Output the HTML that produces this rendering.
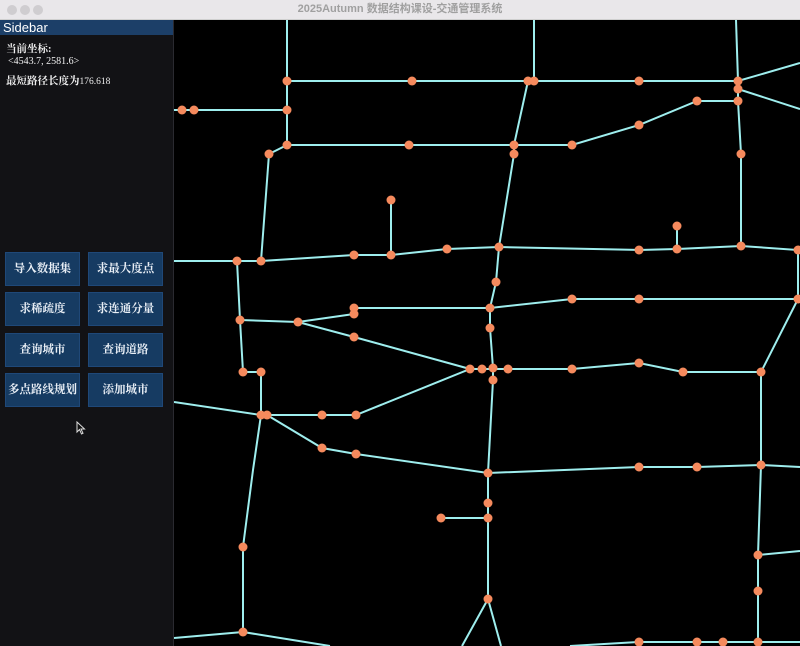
<!DOCTYPE html>
<html><head><meta charset="utf-8"><style>
*{margin:0;padding:0;box-sizing:border-box}
body{width:800px;height:646px;overflow:hidden;background:#000;position:relative;font-family:"Liberation Serif","Noto Serif CJK SC",serif}
#tb{position:absolute;left:0;top:0;width:800px;height:20px;background:#e9e7ea;border-bottom:1px solid #cfcfcf;text-align:center;font:bold 11px "Liberation Sans","Noto Sans CJK SC",sans-serif;color:#a0a0a0;line-height:19px}
.dot{position:absolute;top:5px;width:10px;height:10px;border-radius:50%;background:#cfcdd0}
#sb{position:absolute;left:0;top:20px;width:174px;height:626px;background:#121215;border-right:1px solid #2a2a30}
#sh{height:15px;background:#1c3f68;color:#fff;font:13px "Liberation Sans",sans-serif;padding-left:3px;line-height:15px}
.t{position:absolute;color:#f0f0f0;font-size:10.5px;font-weight:bold}
.b{position:absolute;width:75px;height:34px;background:#163b62;border:1px solid #1f4878;color:#e8eef5;font-size:11.5px;font-weight:bold;text-align:center;line-height:32px}
svg{position:absolute;left:174px;top:20px}
</style></head><body>
<div id="tb"><div class="dot" style="left:7px"></div><div class="dot" style="left:20px"></div><div class="dot" style="left:33px"></div>2025Autumn 数据结构课设-交通管理系统</div>
<div id="sb"><div id="sh">Sidebar</div>
<div class="t" style="left:6px;top:21px">当前坐标:</div>
<div class="t" style="left:8px;top:36px;font-weight:normal;font-size:10px">&lt;4543.7, 2581.6&gt;</div>
<div class="t" style="left:6px;top:53px">最短路径长度为<span style="font-weight:normal;font-size:9.5px">176.618</span></div>
<div class="b" style="left:5px;top:232px">导入数据集</div><div class="b" style="left:88px;top:232px">求最大度点</div>
<div class="b" style="left:5px;top:272px">求稀疏度</div><div class="b" style="left:88px;top:272px">求连通分量</div>
<div class="b" style="left:5px;top:313px">查询城市</div><div class="b" style="left:88px;top:313px">查询道路</div>
<div class="b" style="left:5px;top:353px">多点路线规划</div><div class="b" style="left:88px;top:353px">添加城市</div>
<svg style="position:absolute;left:76px;top:401px" width="10" height="14" viewBox="0 0 10 14"><path d="M1 1 L1 11 L3.5 8.5 L5.5 13 L7 12.3 L5 8 L8.5 8 Z" fill="#111" stroke="#ddd" stroke-width="1"/></svg>
</div>
<svg width="626" height="626" viewBox="174 20 626 626">
<g stroke="#9eeeee" stroke-width="2" fill="none">
<polyline points="287,20 287,81 287,110 287,145"/>
<polyline points="287,81 412,81 528,81 534,81 639,81 738,81 800,63"/>
<polyline points="534,20 534,81"/>
<polyline points="736,20 738,81 738,89 738,101 741,154 741,249"/>
<polyline points="738,89 800,109"/>
<polyline points="174,110 182,110 194,110 287,110"/>
<polyline points="287,145 409,145 514,145 572,145 639,125 697,101 738,101"/>
<polyline points="287,145 269,154 261,261"/>
<polyline points="528,81 514,145 514,154 499,247"/>
<polyline points="391,200 391,255"/>
<polyline points="677,226 677,249"/>
<polyline points="174,261 237,261 261,261 354,255 391,255 447,249 499,247 639,250 677,249 741,246 798,250 798,299 761,372 761,465 758,555 758,591 758,642"/>
<polyline points="237,261 240,320 243,372 261,372 261,415 253,470 243,547 243,632 330,646"/>
<polyline points="174,638 243,632"/>
<polyline points="240,320 298,322 354,314 354,308 490,308"/>
<polyline points="298,322 354,337 470,369"/>
<polyline points="174,402 261,415 267,415 322,415 356,415 470,369 482,369 493,369 508,369 572,369 639,363 683,372 761,372"/>
<polyline points="267,415 322,448 356,454 488,473 639,467 697,467 761,465 800,467"/>
<polyline points="499,247 496,282 490,308 490,328 493,368 493,380 488,473 488,503 488,518 488,599"/>
<polyline points="490,308 572,299 639,299 798,299"/>
<polyline points="441,518 488,518"/>
<polyline points="488,599 462,646"/><polyline points="488,599 501,646"/>
<polyline points="758,555 800,551"/>
<polyline points="570,646 639,642 697,642 723,642 758,642 800,642"/>
</g>
<g fill="#f58a5d">
<circle cx="287" cy="81" r="4.5"/><circle cx="412" cy="81" r="4.5"/><circle cx="528" cy="81" r="4.5"/><circle cx="534" cy="81" r="4.5"/><circle cx="639" cy="81" r="4.5"/><circle cx="738" cy="81" r="4.5"/><circle cx="738" cy="89" r="4.5"/><circle cx="738" cy="101" r="4.5"/><circle cx="697" cy="101" r="4.5"/><circle cx="639" cy="125" r="4.5"/><circle cx="572" cy="145" r="4.5"/><circle cx="514" cy="145" r="4.5"/><circle cx="514" cy="154" r="4.5"/><circle cx="741" cy="154" r="4.5"/>
<circle cx="182" cy="110" r="4.5"/><circle cx="194" cy="110" r="4.5"/><circle cx="287" cy="110" r="4.5"/><circle cx="287" cy="145" r="4.5"/><circle cx="409" cy="145" r="4.5"/><circle cx="269" cy="154" r="4.5"/><circle cx="391" cy="200" r="4.5"/><circle cx="677" cy="226" r="4.5"/>
<circle cx="237" cy="261" r="4.5"/><circle cx="261" cy="261" r="4.5"/><circle cx="354" cy="255" r="4.5"/><circle cx="391" cy="255" r="4.5"/><circle cx="447" cy="249" r="4.5"/><circle cx="499" cy="247" r="4.5"/><circle cx="639" cy="250" r="4.5"/><circle cx="677" cy="249" r="4.5"/><circle cx="741" cy="246" r="4.5"/><circle cx="798" cy="250" r="4.5"/><circle cx="798" cy="299" r="4.5"/>
<circle cx="240" cy="320" r="4.5"/><circle cx="298" cy="322" r="4.5"/><circle cx="354" cy="308" r="4.5"/><circle cx="354" cy="314" r="4.5"/><circle cx="354" cy="337" r="4.5"/><circle cx="490" cy="308" r="4.5"/><circle cx="496" cy="282" r="4.5"/><circle cx="490" cy="328" r="4.5"/><circle cx="572" cy="299" r="4.5"/><circle cx="639" cy="299" r="4.5"/>
<circle cx="243" cy="372" r="4.5"/><circle cx="261" cy="372" r="4.5"/><circle cx="470" cy="369" r="4.5"/><circle cx="482" cy="369" r="4.5"/><circle cx="493" cy="368" r="4.5"/><circle cx="493" cy="380" r="4.5"/><circle cx="508" cy="369" r="4.5"/><circle cx="572" cy="369" r="4.5"/><circle cx="639" cy="363" r="4.5"/><circle cx="683" cy="372" r="4.5"/><circle cx="761" cy="372" r="4.5"/>
<circle cx="261" cy="415" r="4.5"/><circle cx="267" cy="415" r="4.5"/><circle cx="322" cy="415" r="4.5"/><circle cx="356" cy="415" r="4.5"/><circle cx="322" cy="448" r="4.5"/><circle cx="356" cy="454" r="4.5"/>
<circle cx="488" cy="473" r="4.5"/><circle cx="639" cy="467" r="4.5"/><circle cx="697" cy="467" r="4.5"/><circle cx="761" cy="465" r="4.5"/><circle cx="488" cy="503" r="4.5"/><circle cx="488" cy="518" r="4.5"/><circle cx="441" cy="518" r="4.5"/><circle cx="488" cy="599" r="4.5"/>
<circle cx="243" cy="547" r="4.5"/><circle cx="243" cy="632" r="4.5"/><circle cx="758" cy="555" r="4.5"/><circle cx="758" cy="591" r="4.5"/><circle cx="639" cy="642" r="4.5"/><circle cx="697" cy="642" r="4.5"/><circle cx="723" cy="642" r="4.5"/><circle cx="758" cy="642" r="4.5"/>
</g></svg>
</body></html>
